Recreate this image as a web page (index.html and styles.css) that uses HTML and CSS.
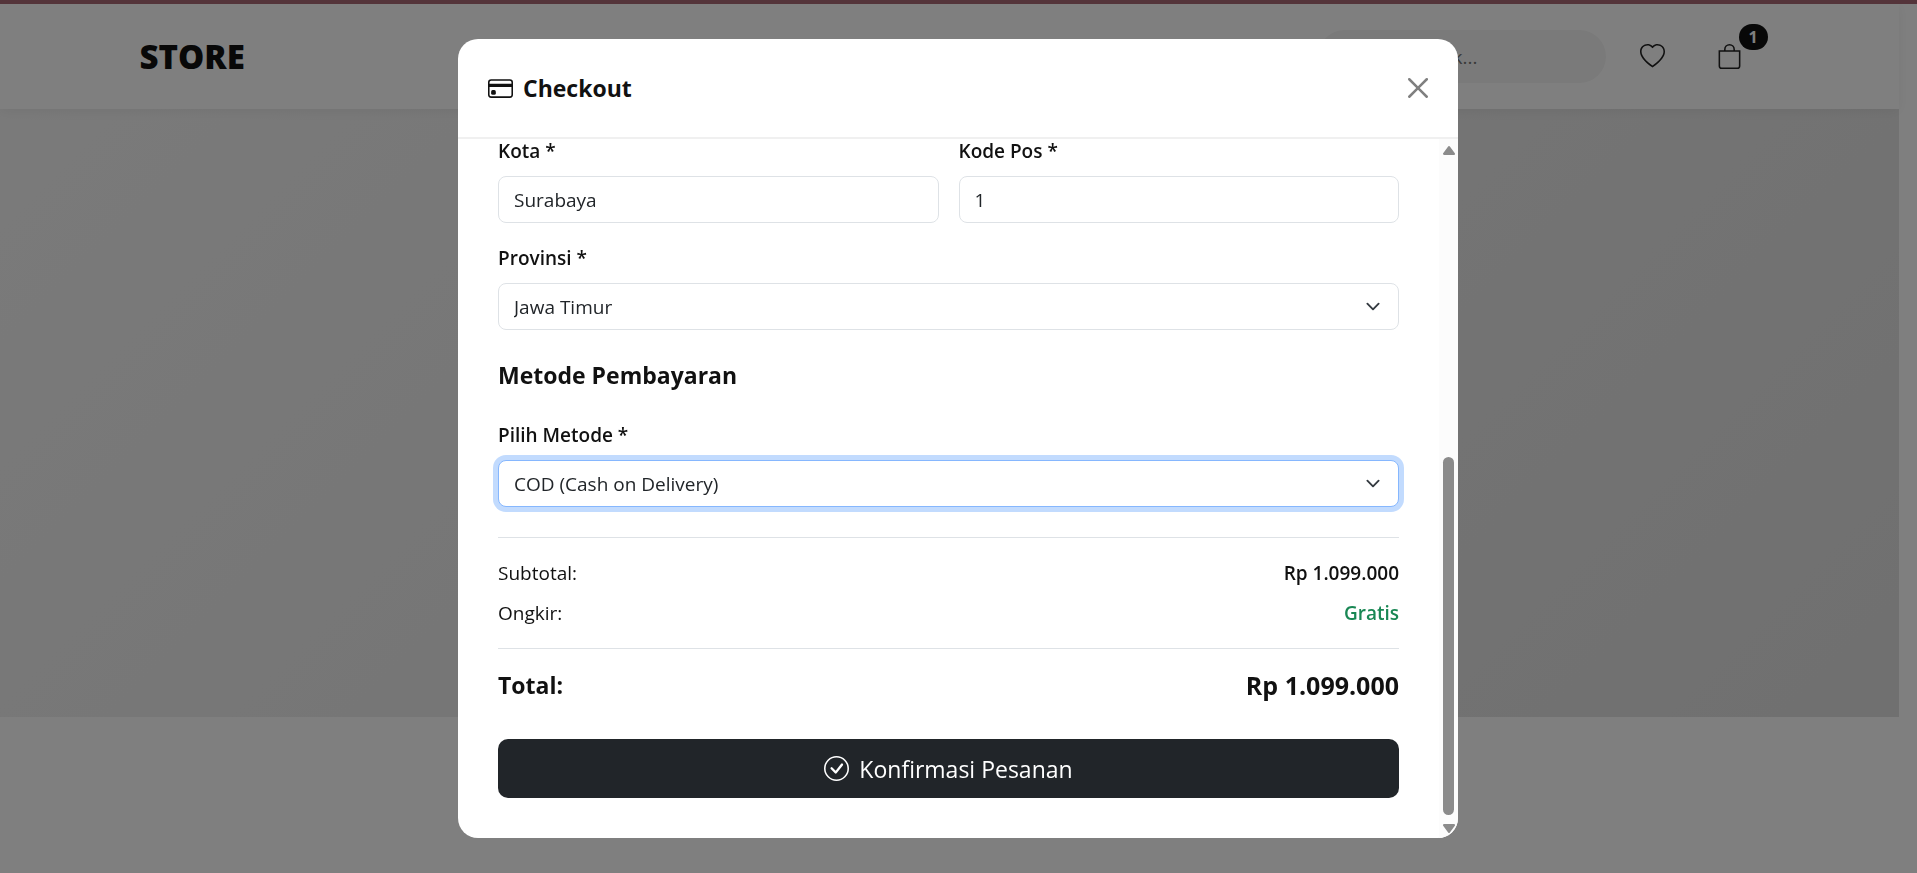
FILE: index.html
```html
<!DOCTYPE html>
<html lang="id">
<head>
<meta charset="utf-8">
<meta name="viewport" content="width=device-width, initial-scale=1">
<title>Store</title>
<link rel="stylesheet" href="styles.css">
</head>
<body>
<div class="page">
  <header class="navbar">
    <div class="navbar-inner">
      <a class="brand" href="#">STORE</a>
      <div class="nav-actions">
        <input class="search" type="search" placeholder="Cari produk..." aria-label="Cari produk">
        <button class="icon-btn" type="button" aria-label="Wishlist">
          <svg class="icon" viewBox="0 0 16 16" fill="currentColor"><path d="m8 2.748-.717-.737C5.6.281 2.514.878 1.4 3.053c-.523 1.023-.641 2.5.314 4.385.92 1.815 2.834 3.989 6.286 6.357 3.452-2.368 5.365-4.542 6.286-6.357.955-1.886.838-3.362.314-4.385C13.486.878 10.4.28 8.717 2.01zM8 15C-7.333 4.868 3.279-3.04 7.824 1.143q.09.083.176.171a3 3 0 0 1 .176-.17C12.72-3.042 23.333 4.867 8 15"/></svg>
        </button>
        <button class="icon-btn" type="button" aria-label="Keranjang">
          <svg class="icon" viewBox="0 0 16 16" fill="currentColor"><path d="M8 1a2.5 2.5 0 0 1 2.5 2.5V4h-5v-.5A2.5 2.5 0 0 1 8 1m3.5 3v-.5a3.5 3.5 0 1 0-7 0V4H1v10a2 2 0 0 0 2 2h10a2 2 0 0 0 2-2V4zM2 5h12v9a1 1 0 0 1-1 1H3a1 1 0 0 1-1-1z"/></svg>
          <span class="badge">1</span>
        </button>
      </div>
    </div>
  </header>
  <section class="hero"></section>
</div>

<div class="backdrop">
  <div class="modal" role="dialog" aria-modal="true" aria-labelledby="checkout-title">
    <div class="modal-header">
      <h2 class="modal-title" id="checkout-title">
        <svg class="icon" viewBox="0 0 16 16" fill="currentColor"><path d="M0 4a2 2 0 0 1 2-2h12a2 2 0 0 1 2 2v8a2 2 0 0 1-2 2H2a2 2 0 0 1-2-2zm2-1a1 1 0 0 0-1 1v1h14V4a1 1 0 0 0-1-1zm13 4H1v5a1 1 0 0 0 1 1h12a1 1 0 0 0 1-1z"/><path d="M2 10a1 1 0 0 1 1-1h1a1 1 0 0 1 1 1v1a1 1 0 0 1-1 1H3a1 1 0 0 1-1-1z"/></svg>
        Checkout
      </h2>
      <button class="close-btn" type="button" aria-label="Tutup">
        <svg viewBox="0 0 16 16" fill="currentColor"><path d="M.293.293a1 1 0 0 1 1.414 0L8 6.586 14.293.293a1 1 0 1 1 1.414 1.414L9.414 8l6.293 6.293a1 1 0 0 1-1.414 1.414L8 9.414l-6.293 6.293a1 1 0 0 1-1.414-1.414L6.586 8 .293 1.707a1 1 0 0 1 0-1.414"/></svg>
      </button>
    </div>
    <div class="modal-body">
      <form class="form">
        <div class="row">
          <div class="field">
            <label for="kota">Kota *</label>
            <input class="control" id="kota" type="text" value="Surabaya">
          </div>
          <div class="field">
            <label for="kodepos">Kode Pos *</label>
            <input class="control" id="kodepos" type="text" value="1">
          </div>
        </div>
        <div class="field">
          <label for="provinsi">Provinsi *</label>
          <select class="control select" id="provinsi"><option>Jawa Timur</option></select>
        </div>
        <h3 class="section-title">Metode Pembayaran</h3>
        <div class="field">
          <label for="metode">Pilih Metode *</label>
          <select class="control select is-active" id="metode"><option>COD (Cash on Delivery)</option></select>
        </div>
        <div class="summary">
          <div class="line"><span>Subtotal:</span><span class="amount">Rp 1.099.000</span></div>
          <div class="line"><span>Ongkir:</span><span class="amount free">Gratis</span></div>
        </div>
        <div class="total"><span>Total:</span><span class="total-amount">Rp 1.099.000</span></div>
        <button class="submit" type="submit">
          <svg class="icon" viewBox="0 0 16 16" fill="currentColor"><path d="M8 15A7 7 0 1 1 8 1a7 7 0 0 1 0 14m0 1A8 8 0 1 0 8 0a8 8 0 0 0 0 16"/><path d="m10.97 4.97-.02.022-3.473 4.425-2.093-2.094a.75.75 0 0 0-1.06 1.06L6.97 11.03a.75.75 0 0 0 1.079-.02l3.992-4.99a.75.75 0 0 0-1.071-1.05"/></svg>
          Konfirmasi Pesanan
        </button>
      </form>
      <div class="scrollbar" aria-hidden="true">
        <svg class="arrow" viewBox="0 0 12 10"><path d="M6 2 10.500 8h-9z"/></svg>
        <div class="track"><div class="thumb"></div></div>
        <svg class="arrow" viewBox="0 0 12 10"><path d="M6 8 1.500 2h9z"/></svg>
      </div>
    </div>
  </div>
</div>
</body>
</html>
```
FILE: styles.css
```css
* { box-sizing: border-box; }

html, body { height: 100%; }

body {
  margin: 0;
  overflow: hidden;
  background: #fff;
  color: #111;
  font-family: "Open Sans", "Noto Sans", sans-serif;
  font-size: 19px;
  line-height: 30px;
}

button, input, select { font: inherit; color: inherit; }

.icon { width: 25px; height: 25px; flex: none; display: block; }

/* Page behind the dialog */
.page { margin-right: 18px; padding-top: 4px; }

.navbar {
  position: relative;
  background: #fff;
  box-shadow: 0 2px 12px rgba(0, 0, 0, .06);
}

.navbar-inner {
  max-width: 1650px;
  height: 105px;
  margin: 0 auto;
  padding: 0 15px;
  display: flex;
  align-items: center;
  justify-content: space-between;
}

.brand {
  color: #111;
  font-size: 33px;
  font-weight: 800;
  text-decoration: none;
}

.nav-actions { display: flex; align-items: center; gap: 17px; }

.search {
  width: 288px;
  height: 53px;
  padding: 0 24px 0 41px;
  border: 0;
  border-radius: 27px;
  background: #f5f5f5;
}

.search::placeholder { color: #757575; opacity: 1; }

.icon-btn {
  position: relative;
  width: 60px;
  height: 60px;
  padding: 0;
  border: 0;
  background: none;
  color: #222;
  display: grid;
  place-items: center;
}

.badge {
  position: absolute;
  top: -3px;
  right: -8px;
  min-width: 29px;
  height: 26px;
  border-radius: 13px;
  background: #111;
  color: #fff;
  font-size: 16px;
  font-weight: 700;
  line-height: 26px;
  text-align: center;
}

.hero {
  height: 608px;
  background: linear-gradient(135deg, #f5f5f5 0%, #e0e0e0 100%);
}

/* Dialog */
.backdrop {
  position: fixed;
  inset: 0;
  padding: 35px 36px 35px 35px;
  border-top: 4px solid #54343a;
  background: rgba(0, 0, 0, .5);
  display: flex;
  justify-content: center;
}

.modal {
  width: 100%;
  max-width: 1000px;
  border-radius: 20px;
  background: #fff;
  overflow: hidden;
  display: flex;
  flex-direction: column;
}

.modal-header {
  height: 100px;
  flex: none;
  padding: 0 30px;
  border-bottom: 2px solid #f0f0f0;
  display: flex;
  align-items: center;
  justify-content: space-between;
}

.modal-title, .section-title {
  margin: 0;
  font-size: 23px;
  font-weight: 700;
  line-height: 30px;
}

.modal-title { display: flex; align-items: center; gap: 10px; }

.close-btn {
  padding: 0;
  border: 0;
  background: none;
  color: #808080;
}

.close-btn svg { width: 20px; height: 20px; display: block; }

.modal-body {
  flex: 1;
  min-height: 0;
  display: flex;
  align-items: flex-end;
  overflow: hidden;
}

.form { flex: 1; padding: 0 40px 40px; }

.row { display: grid; grid-template-columns: 1fr 1fr; gap: 20px; margin-bottom: 20px; }

.field { display: flex; flex-direction: column; gap: 10px; }

.field label { font-weight: 600; }

.control {
  width: 100%;
  height: 47px;
  padding: 0 15px;
  border: 1px solid #dee2e6;
  border-radius: 8px;
  background-color: #fff;
  color: #212529;
  outline: none;
}

.select {
  appearance: none;
  background-image: url("data:image/svg+xml,%3csvg xmlns='http://www.w3.org/2000/svg' viewBox='0 0 16 16'%3e%3cpath fill='none' stroke='%23343a40' stroke-linecap='round' stroke-linejoin='round' stroke-width='2' d='m2 5 6 6 6-6'/%3e%3c/svg%3e");
  background-repeat: no-repeat;
  background-position: right 15px center;
  background-size: 20px 15px;
}

.is-active { border-color: #86b7fe; box-shadow: 0 0 0 5px #c2dbfe; }

.section-title { margin: 30px 0; }

.summary {
  margin-top: 30px;
  padding: 20px 0;
  border-top: 1px solid #dee2e6;
  border-bottom: 1px solid #dee2e6;
  display: grid;
  gap: 10px;
}

.line, .total { display: flex; justify-content: space-between; }

.amount { font-weight: 600; }

.free { color: #198754; }

.total {
  padding: 16px 0 34px;
  font-size: 23px;
  font-weight: 700;
  line-height: 40px;
}

.total-amount { font-size: 25px; }

.submit {
  width: 100%;
  height: 59px;
  padding: 0;
  border: 0;
  border-radius: 10px;
  background: #212529;
  color: #fff;
  font-size: 23px;
  display: flex;
  align-items: center;
  justify-content: center;
  gap: 10px;
}

.scrollbar {
  align-self: stretch;
  width: 19px;
  padding: 6px 0 4px;
  background: #fcfcfc;
  display: flex;
  flex-direction: column;
  align-items: center;
  gap: 8px;
}

.arrow {
  width: 14px;
  height: 11px;
  flex: none;
  fill: #8b8b8b;
  stroke: #8b8b8b;
  stroke-width: 2px;
  stroke-linejoin: round;
}

.track {
  flex: 1;
  display: flex;
  flex-direction: column;
  justify-content: flex-end;
}

.thumb { width: 11px; height: 55%; border-radius: 6px; background: #8b8b8b; }
```
